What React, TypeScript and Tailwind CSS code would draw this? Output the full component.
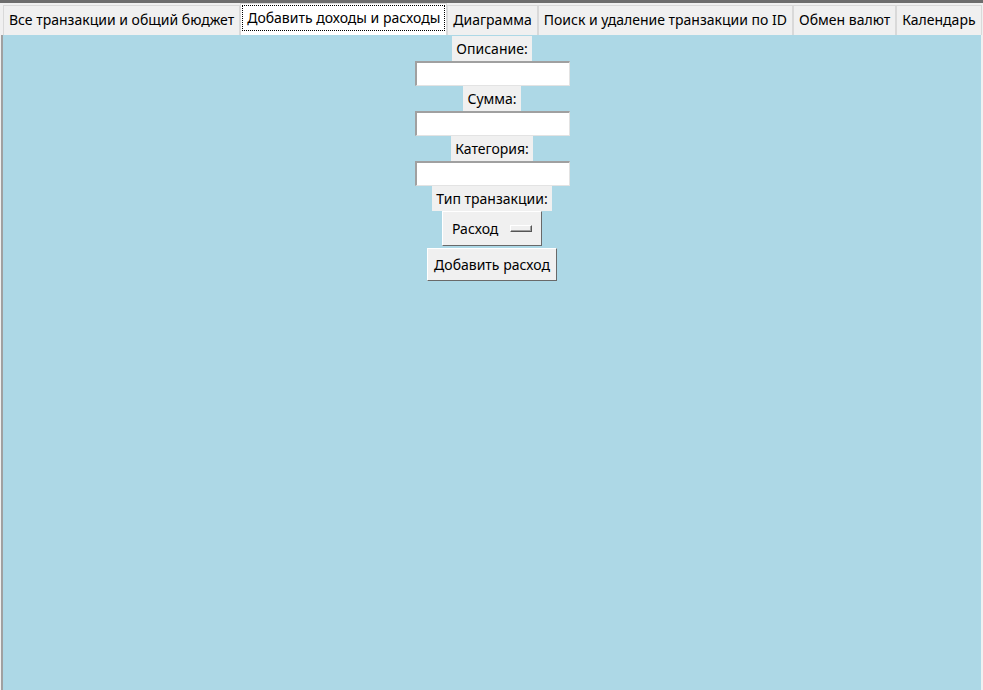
const tabs = [
  "Все транзакции и общий бюджет",
  "Добавить доходы и расходы",
  "Диаграмма",
  "Поиск и удаление транзакции по ID",
  "Обмен валют",
  "Календарь",
];

function Label({ text }: { text: string }) {
  return <div className="bg-[#f0f0f0] px-[4px] h-[25px] leading-[25px]">{text}</div>;
}

function Entry() {
  return (
    <div className="w-[155px] h-[25px] bg-white border-t-2 border-l-2 border-t-[#a0a0a0] border-l-[#a0a0a0] border-b border-r border-b-[#e3e3e3] border-r-[#e3e3e3]" />
  );
}

export default function App() {
  return (
    <div
      className="w-[983px] h-[690px] flex flex-col bg-[#f0f0f0] text-[14px] text-black overflow-hidden"
      style={{ fontFamily: '"Noto Sans", "Open Sans", sans-serif' }}
    >
      <div className="h-[3px] bg-[#6d6d6d]" />
      <div className="flex items-end h-[32px] pl-[3px] bg-[#f0f0f0]">
        {tabs.map((t, i) =>
          i === 1 ? (
            <div key={t} className="h-[32px] px-[1px] pt-[1px] bg-white border-x border-t border-[#d9d9d9]">
              <div className="border border-dotted border-black h-[26px] px-[4px] leading-[24px]">{t}</div>
            </div>
          ) : (
            <div key={t} className="h-[30px] px-[5px] leading-[28px] border-x border-t border-[#d9d9d9] bg-[#f0f0f0]">
              {t}
            </div>
          )
        )}
      </div>
      <div className="flex-1 flex mx-[1px] border-l-2 border-[#a0a0a0]">
        <div className="flex-1 bg-[#add8e6] flex flex-col items-center pt-[1px] mr-[1px]">
          <Label text="Описание:" />
          <Entry />
          <Label text="Сумма:" />
          <Entry />
          <Label text="Категория:" />
          <Entry />
          <Label text="Тип транзакции:" />
          <div className="w-[100px] h-[35px] bg-[#f0f0f0] border border-t-white border-l-white border-r-[#696969] border-b-[#696969] flex items-center pl-[9px]">
            <span>Расход</span>
            <span className="ml-[12px] w-[22px] h-[7px] bg-[#f0f0f0] border border-t-white border-l-white border-r-[#555555] border-b-[#555555] shadow-[inset_-1px_-1px_0_#a0a0a0]" />
          </div>
          <div className="mt-[2px] h-[33px] px-[6px] bg-[#f0f0f0] border border-t-white border-l-white border-r-[#696969] border-b-[#696969] leading-[31px]">
            Добавить расход
          </div>
        </div>
      </div>
    </div>
  );
}
